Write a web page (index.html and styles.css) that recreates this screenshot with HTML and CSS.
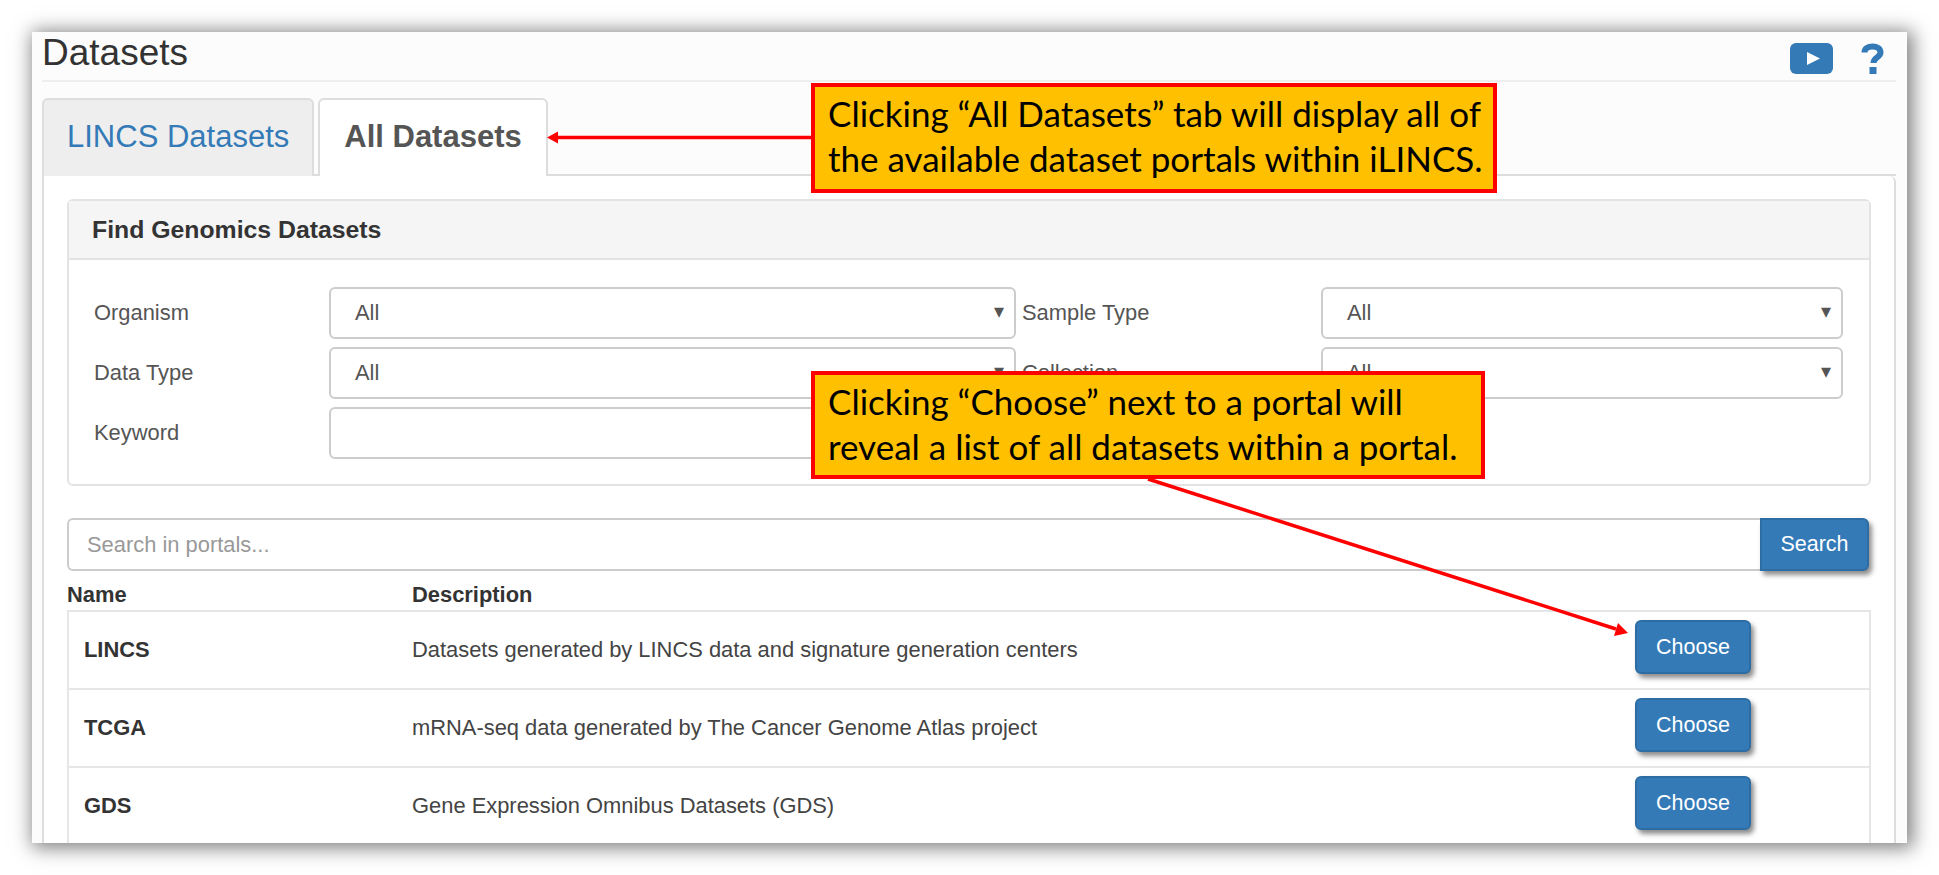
FILE: index.html
```html
<!DOCTYPE html>
<html lang="en">
<head>
    <meta charset="UTF-8">
    <meta name="viewport" content="width=device-width, initial-scale=1.0">
    <title>Datasets</title>
    <link rel="stylesheet" href="styles.css">
</head>
<body>
    <div class="window">
        <div class="page-header">
            <h1>Datasets</h1>
            <div class="header-icons">
                <svg class="icon-video" viewBox="0 0 43 31" width="43" height="31">
                    <rect width="43" height="31" rx="6" fill="#337ab7"/>
                    <path d="M17 9 L30 15.500 L17 22 Z" fill="#fff"/>
                </svg>
                <svg class="icon-help" viewBox="0 0 23 31" width="23" height="31">
                    <path d="M3.500 9.500 C3.500 5.500 7 3.500 11.500 3.500 C16.500 3.500 19.500 6 19.500 9.500 C19.500 14.500 12.500 14.500 12.500 20" fill="none" stroke="#337ab7" stroke-width="6"/>
                    <rect x="8.500" y="24" width="7" height="7" fill="#337ab7"/>
                </svg>
            </div>
        </div>

        <ul class="tabs">
            <li class="tab">LINCS Datasets</li>
            <li class="tab active">All Datasets</li>
        </ul>

        <div class="tab-content">
            <div class="panel">
                <div class="panel-heading">Find Genomics Datasets</div>
                <div class="filter-grid">
                    <label>Organism</label>
                    <div class="select">All</div>
                    <label>Sample Type</label>
                    <div class="select">All</div>
                    <label>Data Type</label>
                    <div class="select">All</div>
                    <label>Collection</label>
                    <div class="select">All</div>
                    <label>Keyword</label>
                    <div class="text-field"></div>
                </div>
            </div>

            <div class="search-row">
                <div class="search-input">Search in portals...</div>
                <button class="btn btn-search">Search</button>
            </div>

            <div class="table-head">
                <div class="col-name">Name</div>
                <div class="col-desc">Description</div>
            </div>
            <div class="table">
                <div class="table-row">
                    <div class="col-name">LINCS</div>
                    <div class="col-desc">Datasets generated by LINCS data and signature generation centers</div>
                    <button class="btn">Choose</button>
                </div>
                <div class="table-row">
                    <div class="col-name">TCGA</div>
                    <div class="col-desc">mRNA-seq data generated by The Cancer Genome Atlas project</div>
                    <button class="btn">Choose</button>
                </div>
                <div class="table-row">
                    <div class="col-name">GDS</div>
                    <div class="col-desc">Gene Expression Omnibus Datasets (GDS)</div>
                    <button class="btn">Choose</button>
                </div>
            </div>
        </div>
    </div>

    <!-- annotations drawn over the screenshot -->
    <svg class="arrows" width="1939" height="875" viewBox="0 0 1939 875">
        <path d="M812 137.500 L556 137.500" stroke="#f00" stroke-width="3.500" fill="none"/>
        <path d="M547 137.500 L558 131.500 L558 143.500 Z" fill="#f00"/>
        <path d="M1148 479 L1616 629" stroke="#f00" stroke-width="3.500" fill="none"/>
        <path d="M1628 633 L1614 636 L1618 623 Z" fill="#f00"/>
    </svg>
    <div class="callout callout-tab">Clicking “All Datasets” tab will display all of<br>the available dataset portals within iLINCS.</div>
    <div class="callout callout-choose">Clicking “Choose” next to a portal will<br>reveal a list of all datasets within a portal.</div>
</body>
</html>
```

FILE: styles.css
```css
* {
    margin: 0;
    padding: 0;
    box-sizing: border-box;
}

body {
    font-family: "Liberation Sans", Arial, sans-serif;
    font-size: 21.900px;
    color: #333;
    background: #fff;
    width: 1939px;
    height: 875px;
    padding: 32px;
    overflow: hidden;
}

.window {
    width: 1875px;
    height: 811px;
    padding: 0 11px 0 10px;
    background: #fcfcfc;
    overflow: hidden;
    box-shadow: 3px 2px 18px 3px rgba(0, 0, 0, 0.5);
}

.page-header {
    height: 50px;
    display: flex;
    justify-content: space-between;
    border-bottom: 2px solid #eee;
}

.page-header h1 {
    font-size: 37px;
    font-weight: 400;
    line-height: 42px;
}

.header-icons {
    display: flex;
    gap: 28px;
    padding: 11px 12px 0 0;
}

.tabs {
    display: flex;
    gap: 4px;
    list-style: none;
    margin-top: 16px;
    height: 78px;
    border-bottom: 2px solid #ddd;
}

.tab {
    font-size: 31px;
    height: 78px;
    line-height: 74px;
    padding: 0 23px;
    color: #337ab7;
    background: #eee;
    border: 2px solid #ddd;
    border-bottom: none;
    border-radius: 6px 6px 0 0;
}

.tab.active {
    font-weight: 700;
    color: #555;
    background: #fff;
    padding: 0 24px;
}

.tab.active::after {
    content: "";
    display: block;
    height: 2px;
    margin: 0 -24px;
    background: #fff;
}

.tab-content {
    background: #fff;
    height: 700px;
    padding: 23px 23px 0 23px;
    border: 2px solid #ddd;
    border-top: none;
    border-radius: 0 6px 0 0;
}

.panel {
    height: 287px;
    border: 2px solid #e3e3e3;
    border-radius: 6px;
}

.panel-heading {
    height: 59px;
    line-height: 57px;
    padding-left: 23px;
    font-size: 24.800px;
    font-weight: 700;
    background: #f5f5f5;
    border-bottom: 2px solid #e3e3e3;
}

.filter-grid {
    display: grid;
    grid-template-columns: 235px 687px 305px 522px;
    grid-auto-rows: 52px;
    row-gap: 8px;
    padding: 27px 0 0 25px;
}

.filter-grid label {
    line-height: 52px;
    color: #555;
}

.filter-grid label:nth-child(4n + 3) {
    padding-left: 6px;
}

.select,
.text-field {
    height: 52px;
    line-height: 48px;
    padding-left: 24px;
    color: #555;
    background: #fff;
    border: 2px solid #ccc;
    border-radius: 6px;
    position: relative;
}

.select::after {
    content: "▾";
    position: absolute;
    right: 10px;
    top: -2px;
    color: #555;
    font-family: "DejaVu Sans", sans-serif;
    font-size: 20px;
}

.search-row {
    display: flex;
    height: 53px;
    margin: 32px 2px 0 0;
}

.search-input {
    flex: 1;
    line-height: 49px;
    padding-left: 18px;
    color: #999;
    background: #fff;
    border: 2px solid #ccc;
    border-right: none;
    border-radius: 6px 0 0 6px;
}

.btn {
    font-family: inherit;
    font-size: 21.500px;
    color: #fff;
    background: #337ab7;
    border: 2px solid #2e6da4;
    border-radius: 6px;
    box-shadow: 3px 4px 5px rgba(0, 0, 0, 0.45);
}

.btn-search {
    width: 109px;
    border-radius: 0 6px 6px 0;
}

.table-head {
    display: flex;
    height: 39px;
    line-height: 48px;
    font-weight: 700;
}

.table-head .col-name {
    width: 345px;
}

.table {
    border: 2px solid #e6e6e6;
    border-bottom: none;
}

.table-row {
    display: flex;
    align-items: center;
    height: 78px;
    padding: 0 0 1px 15px;
    border-bottom: 2px solid #e6e6e6;
}

.table-row .col-name {
    width: 328px;
    font-weight: 700;
}

.table-row .col-desc {
    width: 1223px;
    color: #444;
}

.table-row .btn {
    width: 116px;
    height: 54px;
    margin-bottom: 5px;
}

.arrows {
    position: absolute;
    left: 0;
    top: 0;
}

.callout {
    position: absolute;
    font-family: Lato, sans-serif;
    font-size: 35px;
    line-height: 45px;
    color: #000;
    background: #ffc000;
    border: 4px solid #f00;
    padding: 4px 0 0 13px;
    white-space: nowrap;
}

.callout-tab {
    left: 811px;
    top: 83px;
    width: 686px;
    height: 110px;
}

.callout-choose {
    left: 811px;
    top: 371px;
    width: 674px;
    height: 108px;
}
```
